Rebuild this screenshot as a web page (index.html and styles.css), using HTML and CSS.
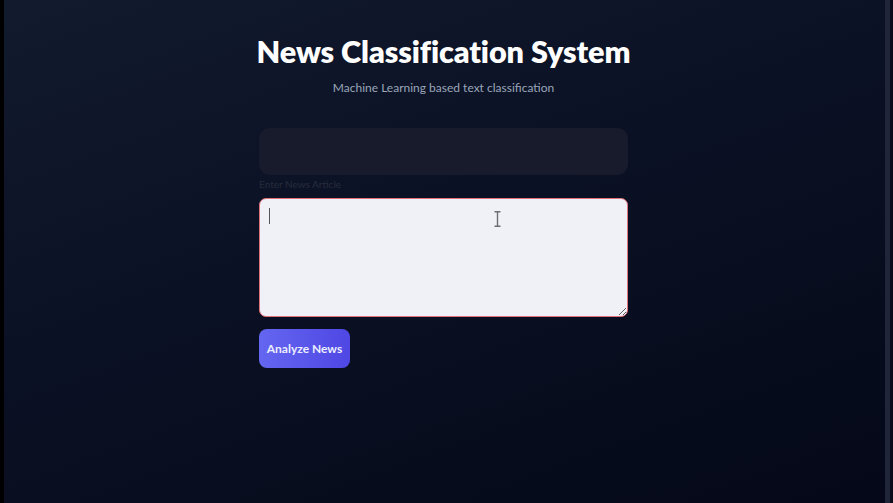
FILE: index.html
```html
<!DOCTYPE html>
<html lang="en">
<head>
<meta charset="utf-8">
<title>News Classification System</title>
<link rel="stylesheet" href="styles.css">
</head>
<body>
<div class="frame">
  <div class="edge"></div>
  <main class="app">
    <div class="column">
      <h1 class="title">News Classification System</h1>
      <p class="subtitle">Machine Learning based text classification</p>
      <div class="panel"></div>
      <label class="label" for="article">Enter News Article</label>
      <div class="field">
        <textarea id="article" class="textarea"></textarea>
        <span class="caret"></span>
        <svg class="ibeam" width="7" height="16" viewBox="0 0 7 16"><path d="M0.5 0.8h6M3.5 0.8v14.4M0.5 15.2h6" stroke="#6d6e74" stroke-width="1.4" fill="none"/></svg>
      </div>
      <button class="btn" type="button">Analyze News</button>
    </div>
  </main>
  <div class="scrollbar"><div class="thumb"></div></div>
</div>
</body>
</html>
```
FILE: styles.css
```css
* { box-sizing: border-box; }
html, body { margin: 0; height: 100%; }
body {
  font-family: "Lato", "Noto Sans", sans-serif;
  background: #000;
  overflow: hidden;
}
.frame {
  display: flex;
  height: 100vh;
}
.edge {
  width: 4px;
  background: #000;
  flex: none;
}
.app {
  flex: 1;
  padding-right: 2px;
  background: linear-gradient(160deg, #121a2d 0%, #0b1124 45%, #040818 100%);
  display: flex;
  justify-content: center;
}
.scrollbar {
  width: 8px;
  flex: none;
  background: #0b0e1a;
  display: flex;
}
.thumb {
  width: 5px;
  height: 100%;
  background: #20253a;
}
.column {
  width: 369px;
  padding-top: 33px;
  display: flex;
  flex-direction: column;
}
.title {
  margin: 0 -20px;
  white-space: nowrap;
  text-align: center;
  color: #ffffff;
  font-size: 30.6px;
  font-weight: 800;
  line-height: 37px;
  letter-spacing: -0.1px;
}
.subtitle {
  margin: 10px 0 0;
  text-align: center;
  color: #9aa6ba;
  font-size: 12px;
  line-height: 16px;
}
.panel {
  margin-top: 32px;
  height: 47px;
  border-radius: 11px;
  background: #181b2b;
}
.label {
  margin-top: 3px;
  font-size: 10px;
  line-height: 12px;
  color: #272c3c;
}
.field {
  position: relative;
  margin-top: 8px;
  height: 119px;
}
.textarea {
  display: block;
  width: 100%;
  height: 100%;
  margin: 0;
  border: 1px solid #e0707a;
  border-radius: 7px;
  background: #f0f1f6;
  outline: none;
  resize: vertical;
  font-family: inherit;
}
.caret {
  position: absolute;
  left: 10px;
  top: 10px;
  width: 1px;
  height: 16px;
  background: #55565c;
}
.ibeam {
  position: absolute;
  left: 235px;
  top: 13px;
}
.btn {
  align-self: flex-start;
  margin-top: 12px;
  width: 91px;
  height: 39px;
  border: 0;
  border-radius: 8px;
  background: linear-gradient(90deg, #6466f0 0%, #4f47e4 100%);
  color: #eceefe;
  font-family: inherit;
  font-size: 12px;
  font-weight: 700;
  padding: 0;
}
```
